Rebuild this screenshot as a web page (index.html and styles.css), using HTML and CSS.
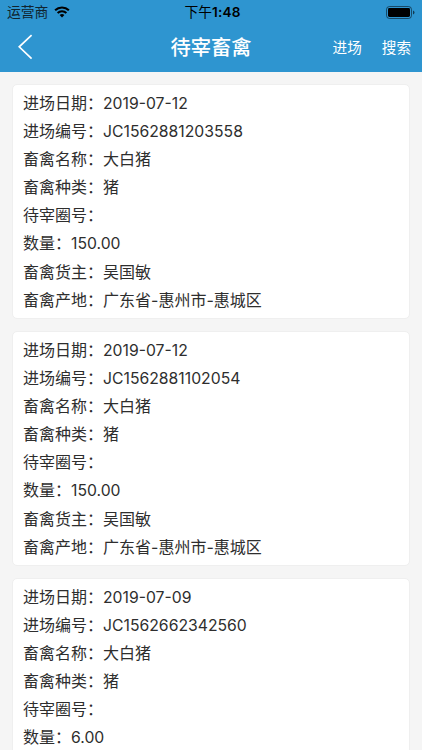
FILE: index.html
```html
<!DOCTYPE html>
<html lang="zh-CN">
<head>
<meta charset="utf-8">
<title>待宰畜禽</title>
<link rel="stylesheet" href="styles.css">
</head>
<body>
<header class="top">
  <div class="status">
    <div class="carrier"><span>运营商</span>
      <svg class="wifi" width="16" height="12" viewBox="0 0 16 12"><path d="M8 11.6 5.6 9.1a3.5 3.5 0 0 1 4.8 0z" fill="#000"/><path d="M3.6 7a6.3 6.3 0 0 1 8.8 0M1.1 4.3a9.9 9.9 0 0 1 13.8 0" fill="none" stroke="#000" stroke-width="2"/></svg>
    </div>
    <div class="time">下午<span class="clock">1:48</span></div>
    <svg class="battery" width="29" height="13" viewBox="0 0 29 13"><rect x=".5" y=".5" width="25" height="12" rx="3" fill="none" stroke="#000" stroke-opacity=".5"/><rect x="2" y="2" width="22" height="9" rx="1.4"/><path d="M27 4.5v4q1.5-.6 1.5-2t-1.5-2z" fill-opacity=".6"/></svg>
  </div>
  <nav class="nav">
    <svg class="back" width="16" height="26" viewBox="0 0 16 26"><path d="M13.6 1.2 1.2 12.8l12.4 11.8" fill="none" stroke="#fff" stroke-width="1.7"/></svg>
    <h1>待宰畜禽</h1>
    <div class="actions"><span>进场</span><span>搜索</span></div>
  </nav>
</header>
<main class="list">
  <section class="card">
    <p>进场日期：<span class="num">2019-07-12</span></p>
    <p>进场编号：<span class="num">JC1562881203558</span></p>
    <p>畜禽名称：<span>大白猪</span></p>
    <p>畜禽种类：<span>猪</span></p>
    <p>待宰圈号：</p>
    <p>数量：<span class="num">150.00</span></p>
    <p>畜禽货主：<span>吴国敏</span></p>
    <p>畜禽产地：<span>广东省-惠州市-惠城区</span></p>
  </section>
  <section class="card">
    <p>进场日期：<span class="num">2019-07-12</span></p>
    <p>进场编号：<span class="num">JC1562881102054</span></p>
    <p>畜禽名称：<span>大白猪</span></p>
    <p>畜禽种类：<span>猪</span></p>
    <p>待宰圈号：</p>
    <p>数量：<span class="num">150.00</span></p>
    <p>畜禽货主：<span>吴国敏</span></p>
    <p>畜禽产地：<span>广东省-惠州市-惠城区</span></p>
  </section>
  <section class="card">
    <p>进场日期：<span class="num">2019-07-09</span></p>
    <p>进场编号：<span class="num">JC1562662342560</span></p>
    <p>畜禽名称：<span>大白猪</span></p>
    <p>畜禽种类：<span>猪</span></p>
    <p>待宰圈号：</p>
    <p>数量：<span class="num">6.00</span></p>
  </section>
</main>
</body>
</html>
```
FILE: styles.css
```css
* { box-sizing: border-box; }
body {
  margin: 0;
  height: 750px;
  display: flex;
  flex-direction: column;
  overflow: hidden;
  background: #f5f5f5;
  color: #2e2e2e;
  font-family: Inter, "Noto Sans CJK SC", sans-serif;
}
.top { flex: none; height: 72px; background: #2e95d0; }
.status {
  height: 24px;
  display: grid;
  grid-template-columns: 1fr auto 1fr;
  align-items: center;
  padding: 0 7px;
  color: #10242f;
  font-size: 13.8px;
  line-height: 24px;
}
.carrier { display: flex; align-items: center; gap: 6px; }
.time { padding-left: 3px; color: #000; }
.clock { font-size: 13.6px; font-weight: 600; letter-spacing: .2px; }
.battery { justify-self: end; }
.nav {
  height: 48px;
  display: grid;
  grid-template-columns: 1fr auto 1fr;
  align-items: center;
  padding: 0 11px;
  color: #fff;
}
.back { margin: -2px 0 0 7px; }
h1 { margin: 0; font-size: 20.3px; font-weight: 500; line-height: 48px; }
.actions { display: flex; justify-content: flex-end; gap: 20px; padding-bottom: 3px; font-size: 14.6px; }
.list { flex: 1; min-height: 0; overflow: hidden; padding: 12px 12px 0; }
.card {
  height: 235px;
  margin-bottom: 12px;
  padding: 4px 10px;
  border: 1px solid #efefef;
  border-radius: 5px;
  background: #fff;
}
.card p { margin: 0; height: 28.1px; line-height: 28px; font-size: 16px; white-space: nowrap; }
.card .num { font-size: 15.75px; }
```
